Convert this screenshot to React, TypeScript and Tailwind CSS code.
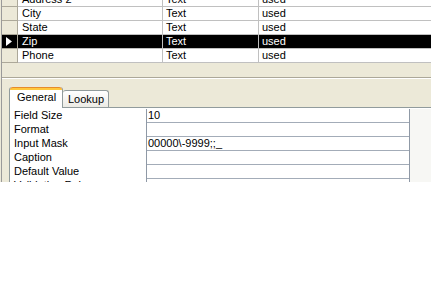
import React from "react";

const fields = [
  { name: "Address 2", type: "Text", desc: "used" },
  { name: "City", type: "Text", desc: "used" },
  { name: "State", type: "Text", desc: "used" },
  { name: "Zip", type: "Text", desc: "used", current: true },
  { name: "Phone", type: "Text", desc: "used" },
];

const props = [
  { label: "Field Size", value: "10" },
  { label: "Format", value: "" },
  { label: "Input Mask", value: "00000\\-9999;;_" },
  { label: "Caption", value: "" },
  { label: "Default Value", value: "" },
  { label: "Validation Rule", value: "" },
];

function FieldRow({ name, type, desc, current }: { name: string; type: string; desc: string; current?: boolean }) {
  return (
    <div className={`flex h-[14px] leading-[13px] ${current ? "bg-black text-white" : "bg-white text-black"}`}>
      <div
        className={`flex w-[16px] shrink-0 items-center pl-[4px] border-r border-b border-[#aca899] ${
          current ? "bg-black" : "bg-[#ece9d8]"
        }`}
      >
        {current && (
          <svg width="6" height="9" viewBox="0 0 6 9">
            <polygon points="0,0 6,4.5 0,9" fill="#fff" />
          </svg>
        )}
      </div>
      <div className="w-[145px] shrink-0 pl-[4px] border-r border-b border-[#c0c0c0]">{name}</div>
      <div className="w-[96px] shrink-0 pl-[3px] border-r border-b border-[#c0c0c0]">{type}</div>
      <div className="flex-1 pl-[3px] border-b border-[#c0c0c0]">{desc}</div>
    </div>
  );
}

export default function App() {
  return (
    <div className="h-[284px] w-[431px] bg-white text-[11px] text-black" style={{ fontFamily: '"Liberation Sans", Arial, sans-serif' }}>
      <div className="h-[182px] overflow-hidden bg-[#ece9d8] pl-px">
        <div className="h-full border-l border-[#9a9a9a] flex flex-col">
          {/* field grid */}
          <div className="mt-[-7px]">
            {fields.map((f) => (
              <FieldRow key={f.name} {...f} />
            ))}
          </div>

          {/* splitter */}
          <div className="h-[15px] shrink-0 border-b border-[#aca899]" />
          <div className="h-px shrink-0 bg-white" />

          {/* property sheet */}
          <div className="flex flex-1 flex-col pl-[7px] pt-[7px]">
            <div className="flex items-end h-[21px] shrink-0">
              <div className="relative z-10 mb-[-1px] flex h-[21px] w-[54px] flex-col rounded-t-[3px] border-x border-[#919b9c] bg-white">
                <div className="h-[3px] rounded-t-[3px] bg-[#ffc83c] border-t border-[#e68b2c]" />
                <div className="pl-[7px] pt-[1px] leading-[13px]">General</div>
              </div>
              <div className="flex h-[17px] w-[46px] items-center rounded-t-[3px] border-t border-r border-[#919b9c] bg-gradient-to-b from-white to-[#ecebe5] pl-[5px] leading-[13px]">
                Lookup
              </div>
            </div>
            <div className="flex flex-1 border-t border-l border-[#919b9c] bg-white pt-px">
              <div className="w-[136px] shrink-0">
                {props.map((p) => (
                  <div key={p.label} className="h-[14px] pl-[4px] leading-[13px]">
                    {p.label}
                  </div>
                ))}
              </div>
              <div className="w-[264px] shrink-0 border-x border-[#8f99a6]">
                {props.map((p) => (
                  <div key={p.label} className="h-[14px] pl-[1px] leading-[13px] border-b border-[#a3acb8]">
                    {p.value}
                  </div>
                ))}
              </div>
              <div className="flex-1 bg-[#f7f7f4]" />
            </div>
          </div>
        </div>
      </div>
    </div>
  );
}
